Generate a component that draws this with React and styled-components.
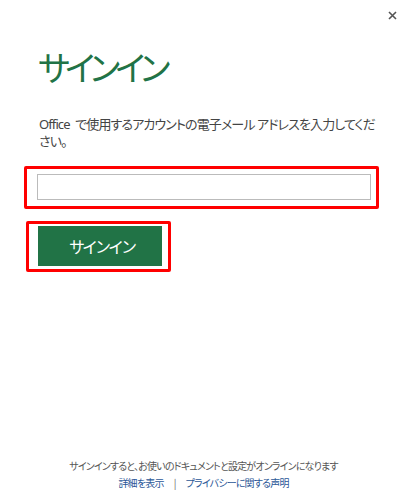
import styled, { createGlobalStyle } from "styled-components";

const GlobalStyle = createGlobalStyle`
  html, body {
    margin: 0;
    padding: 0;
    background: #fff;
  }
  body {
    font-family: "Noto Sans", "Noto Sans CJK JP", sans-serif;
  }
`;

const Window = styled.div`
  width: 407px;
  height: 500px;
  display: flex;
  flex-direction: column;
  background: #fff;
  overflow: hidden;
  font-feature-settings: "palt";
`;

const TopBar = styled.div`
  display: flex;
  justify-content: flex-end;
  padding: 9px 9px 0 0;
`;

const CloseButton = styled.button`
  width: 12px;
  height: 12px;
  padding: 0;
  border: 0;
  background: none;
  display: flex;
  align-items: center;
  justify-content: center;
  cursor: pointer;
`;

const Main = styled.div`
  display: flex;
  flex-direction: column;
  padding: 0 28px 0 38px;
  flex: 1;
`;

const Title = styled.h1`
  margin: 24px 0 0;
  font-family: "Noto Sans CJK JP", sans-serif;
  font-weight: 400;
  font-size: 34px;
  letter-spacing: -5px;
  line-height: 44px;
  color: #217346;
`;

const Description = styled.p`
  margin: 27px 0 0 1px;
  max-width: 338px;
  font-size: 13px;
  letter-spacing: -0.9px;
  line-height: 17px;
  color: #444;
  font-variant-ligatures: none;
  font-feature-settings: "palt", "liga" 0;
`;

const Highlight = styled.div`
  align-self: flex-start;
  border: 3px solid #ff0000;
  border-radius: 2px;
  margin: ${(p) => p.$margin};
  padding: ${(p) => p.$padding};
`;

const EmailInput = styled.input`
  display: block;
  box-sizing: border-box;
  width: 334px;
  height: 26px;
  border: 1px solid #bbb;
  padding: 2px 6px;
  font-size: 13px;
  outline: none;
`;

const SignInButton = styled.button`
  display: block;
  width: 124px;
  height: 40px;
  border: 0;
  padding: 0 0 0 3px;
  background: #217346;
  color: #fff;
  font-family: "Noto Sans CJK JP", sans-serif;
  font-size: 16px;
  letter-spacing: -3px;
  cursor: pointer;
`;

const Footer = styled.div`
  display: flex;
  flex-direction: column;
  align-items: center;
  padding-bottom: 9px;
  font-family: "Noto Sans CJK JP", sans-serif;
  font-size: 10px;
  letter-spacing: -0.8px;
  line-height: 17px;
  color: #555;
`;

const LinkRow = styled.div`
  display: flex;
  gap: 10px;
`;

const Link = styled.a`
  color: #2b5797;
  text-decoration: none;
`;

const Separator = styled.span`
  color: #666;
`;

export default function App() {
  return (
    <>
      <GlobalStyle />
      <Window>
        <TopBar>
          <CloseButton aria-label="閉じる">
            <svg width="9" height="9" viewBox="0 0 9 9">
              <path d="M1 1L8 8M8 1L1 8" stroke="#555" strokeWidth="1.6" />
            </svg>
          </CloseButton>
        </TopBar>
        <Main>
          <Title>サインイン</Title>
          <Description>
            Office{"\u2002"}で使用するアカウントの電子メール アドレスを入力してください。
          </Description>
          <Highlight $margin="16px 0 0 -14px" $padding="5px 5px 6px 10px">
            <EmailInput type="email" />
          </Highlight>
          <Highlight $margin="12px 0 0 -12px" $padding="2px 6px 3px 9px">
            <SignInButton>サインイン</SignInButton>
          </Highlight>
        </Main>
        <Footer>
          <div>サインインすると、お使いのドキュメントと設定がオンラインになります</div>
          <LinkRow>
            <Link href="#">詳細を表示</Link>
            <Separator>|</Separator>
            <Link href="#">プライバシーに関する声明</Link>
          </LinkRow>
        </Footer>
      </Window>
    </>
  );
}
